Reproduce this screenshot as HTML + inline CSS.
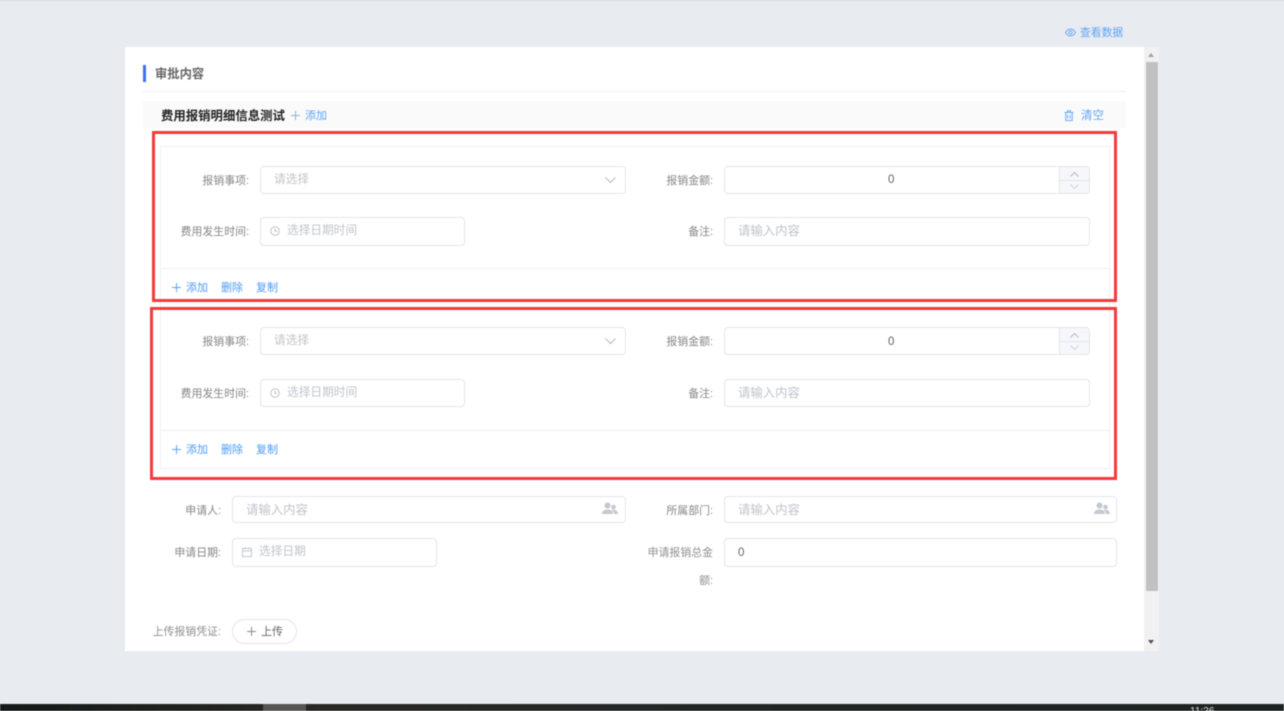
<!DOCTYPE html>
<html lang="zh-CN">
<head>
<meta charset="utf-8">
<title>审批内容</title>
<style>
html,body{margin:0;padding:0}
body{position:relative;width:1284px;height:711px;overflow:hidden;background:#e8ecf1;font-family:"Liberation Sans","Noto Sans CJK SC",sans-serif;color:#8a8a8a;font-size:11px}
#s{position:absolute;left:0;top:0;width:1284px;height:711px;filter:blur(.45px)}
.a,.t,.i{position:absolute;box-sizing:border-box}
.t{white-space:nowrap;line-height:16px;height:16px}
.l{text-align:right;color:#858585;font-size:10.900px;transform:translate(-1px,1px)}
.p{color:#bfc3ca;font-size:11.700px}
.q{color:#bfc3ca;font-size:12.400px}
.b{color:#4c9bfb;font-size:11px;transform:translateY(1px)}
.i{background:#fff;border:1px solid #e3e5ec;border-radius:4px}
svg{position:absolute;overflow:visible}
.red{position:absolute;box-sizing:border-box;border:3px solid #f23c3c}
</style>
</head>
<body>
<div id="s">
<div class="a" style="left:0;top:0;width:1284px;height:1px;background:#d5d8de"></div>

<svg style="left:1065px;top:28px" width="11" height="9" viewBox="0 0 11 9" fill="none" stroke="#6ea9f5" stroke-width="1"><path d="M.5 4.500C2 2 3.700 1 5.500 1S9 2 10.500 4.500C9 7 7.300 8 5.500 8S2 7 .5 4.500Z"/><circle cx="5.500" cy="4.500" r="1.600"/></svg>
<div class="t b" style="left:1080px;top:24px;font-size:10.800px;color:#5da3f5">查看数据</div>

<div class="a" style="left:125px;top:47px;width:1019px;height:604px;background:#fff"></div>
<div class="a" style="left:1144px;top:47px;width:15px;height:604px;background:#f1f1f1"></div>
<div class="a" style="left:1146px;top:62px;width:12px;height:529px;background:#c1c1c1"></div>
<div class="a" style="left:1148px;top:53px;border-left:3.500px solid transparent;border-right:3.500px solid transparent;border-bottom:4px solid #a3a3a3"></div>
<div class="a" style="left:1148px;top:640px;border-left:3.500px solid transparent;border-right:3.500px solid transparent;border-top:4px solid #505050"></div>

<div class="a" style="left:143px;top:65px;width:3px;height:17px;background:#3f6ff5"></div>
<div class="t" style="left:155px;top:66px;font-size:12.300px;font-weight:bold;color:#666">审批内容</div>
<div class="a" style="left:143px;top:91px;width:983px;height:1px;background:#eeeff2"></div>

<div class="a" style="left:143px;top:101px;width:983px;height:27px;background:#fafafa"></div>
<div class="t" style="left:161px;top:108px;font-size:12.400px;font-weight:bold;color:#222">费用报销明细信息测试</div>
<svg style="left:291px;top:111px" width="9" height="9" fill="none" stroke="#8ab0e0"><path d="M4.500 0v9M0 4.500h9"/></svg>
<div class="t b" style="left:305px;top:107px;color:#5da3f5">添加</div>
<svg style="left:1064px;top:110px" width="10" height="11" viewBox="0 0 10 11" fill="none" stroke="#6ea9f5"><path d="M.5 2.500h9M3.500 2.500V.8h3v1.700M1.800 2.500v8h6.400v-8M3.800 5v3.500M6.200 5v3.500"/></svg>
<div class="t b" style="left:1081px;top:107px;color:#5da3f5;font-size:11.500px">清空</div>

<!-- item 1 -->
<div class="a" style="left:160px;top:146px;width:950px;height:200px;border:1px solid #eef0f5;border-bottom:none"></div>
<div class="a" style="left:161px;top:268px;width:948px;height:1px;background:#eef0f5"></div>
<div class="t l" style="left:160px;top:172px;width:90px">报销事项:</div>
<div class="i" style="left:260px;top:166px;width:366px;height:28px"></div>
<div class="t p" style="left:274px;top:172px">请选择</div>
<svg style="left:605px;top:177px" width="11" height="6" fill="none" stroke="#b4b8bf"><path d="M.5.500l5 5 5-5"/></svg>
<div class="t l" style="left:624px;top:172px;width:90px">报销金额:</div>
<div class="i" style="left:724px;top:166px;width:366px;height:28px"></div>
<div class="a" style="left:1059px;top:167px;width:30px;height:26px;background:#f6f7fa;border-left:1px solid #e3e5ec;border-radius:0 3px 3px 0"></div>
<div class="a" style="left:1060px;top:180px;width:29px;height:1px;background:#e3e5ec"></div>
<svg style="left:1070px;top:172px" width="9" height="17" fill="none" stroke="#b4b8bf"><path d="M.5 4.500l4-4 4 4"/><path stroke="#d0d3d9" d="M.5 12.500l4 4 4-4"/></svg>
<div class="t" style="left:888px;top:172px;color:#606266;font-size:11.500px">0</div>
<div class="t l" style="left:160px;top:223px;width:90px">费用发生时间:</div>
<div class="i" style="left:260px;top:217px;width:205px;height:29px"></div>
<svg style="left:270px;top:226px" width="10" height="10" fill="none" stroke="#bfc3ca"><circle cx="5" cy="5" r="4.300"/><path d="M5 2.500v2.800h2.200"/></svg>
<div class="t p" style="left:287px;top:223px">选择日期时间</div>
<div class="t l" style="left:624px;top:223px;width:90px">备注:</div>
<div class="i" style="left:724px;top:217px;width:366px;height:29px"></div>
<div class="t q" style="left:738px;top:223px">请输入内容</div>
<svg style="left:172px;top:283px" width="9" height="9" fill="none" stroke="#5da3f5"><path d="M4.500 0v9M0 4.500h9"/></svg>
<div class="t b" style="left:186px;top:279px">添加</div>
<div class="t b" style="left:221px;top:279px">删除</div>
<div class="t b" style="left:256px;top:279px">复制</div>

<!-- item 2 -->
<div class="a" style="left:160px;top:308px;width:950px;height:161px;border:1px solid #eef0f5;border-top:none"></div>
<div class="a" style="left:161px;top:430px;width:948px;height:1px;background:#eef0f5"></div>
<div class="t l" style="left:160px;top:333px;width:90px">报销事项:</div>
<div class="i" style="left:260px;top:327px;width:366px;height:28px"></div>
<div class="t p" style="left:274px;top:333px">请选择</div>
<svg style="left:605px;top:338px" width="11" height="6" fill="none" stroke="#b4b8bf"><path d="M.5.500l5 5 5-5"/></svg>
<div class="t l" style="left:624px;top:333px;width:90px">报销金额:</div>
<div class="i" style="left:724px;top:327px;width:366px;height:28px"></div>
<div class="a" style="left:1059px;top:328px;width:30px;height:26px;background:#f6f7fa;border-left:1px solid #e3e5ec;border-radius:0 3px 3px 0"></div>
<div class="a" style="left:1060px;top:341px;width:29px;height:1px;background:#e3e5ec"></div>
<svg style="left:1070px;top:333px" width="9" height="17" fill="none" stroke="#b4b8bf"><path d="M.5 4.500l4-4 4 4"/><path stroke="#d0d3d9" d="M.5 12.500l4 4 4-4"/></svg>
<div class="t" style="left:888px;top:333px;color:#606266;font-size:11.500px;transform:translateY(1px)">0</div>
<div class="t l" style="left:160px;top:385px;width:90px">费用发生时间:</div>
<div class="i" style="left:260px;top:379px;width:205px;height:28px"></div>
<svg style="left:270px;top:388px" width="10" height="10" fill="none" stroke="#bfc3ca"><circle cx="5" cy="5" r="4.300"/><path d="M5 2.500v2.800h2.200"/></svg>
<div class="t p" style="left:287px;top:385px">选择日期时间</div>
<div class="t l" style="left:624px;top:385px;width:90px">备注:</div>
<div class="i" style="left:724px;top:379px;width:366px;height:28px"></div>
<div class="t q" style="left:738px;top:385px">请输入内容</div>
<svg style="left:172px;top:445px" width="9" height="9" fill="none" stroke="#5da3f5"><path d="M4.500 0v9M0 4.500h9"/></svg>
<div class="t b" style="left:186px;top:441px">添加</div>
<div class="t b" style="left:221px;top:441px">删除</div>
<div class="t b" style="left:256px;top:441px">复制</div>

<!-- red boxes -->
<div class="red" style="left:152px;top:131px;width:965px;height:171px"></div>
<div class="red" style="left:150px;top:307px;width:967px;height:173px"></div>

<!-- footer form -->
<div class="t l" style="left:132px;top:502px;width:90px">申请人:</div>
<div class="i" style="left:232px;top:496px;width:394px;height:27px"></div>
<div class="t q" style="left:246px;top:502px">请输入内容</div>
<svg style="left:602px;top:502px" width="16" height="13" viewBox="0 0 16 13" fill="#c4c8cf"><circle cx="5.500" cy="3.500" r="3"/><path d="M0 12c0-3 2.500-4.500 5.500-4.500S11 9 11 12z"/><circle cx="11.500" cy="5" r="2.300"/><path d="M9.500 8c3-1 6 0 6.500 4h-4c0-1.500-1-3-2.500-4z"/></svg>
<div class="t l" style="left:624px;top:502px;width:90px">所属部门:</div>
<div class="i" style="left:724px;top:496px;width:393px;height:27px"></div>
<div class="t q" style="left:738px;top:502px">请输入内容</div>
<svg style="left:1094px;top:502px" width="16" height="13" viewBox="0 0 16 13" fill="#c4c8cf"><circle cx="5.500" cy="3.500" r="3"/><path d="M0 12c0-3 2.500-4.500 5.500-4.500S11 9 11 12z"/><circle cx="11.500" cy="5" r="2.300"/><path d="M9.500 8c3-1 6 0 6.500 4h-4c0-1.500-1-3-2.500-4z"/></svg>

<div class="t l" style="left:132px;top:544px;width:90px">申请日期:</div>
<div class="i" style="left:232px;top:538px;width:205px;height:29px"></div>
<svg style="left:242px;top:547px" width="10" height="10" fill="none" stroke="#c4c8cf"><path d="M.5 1.500h9v8h-9zM.5 4h9M3 .2v2M7 .2v2"/></svg>
<div class="t p" style="left:259px;top:544px">选择日期</div>
<div class="t l" style="left:624px;top:544px;width:90px;color:#8f8f8f">申请报销总金</div>
<div class="t l" style="left:624px;top:572px;width:90px;color:#8f8f8f">额:</div>
<div class="i" style="left:724px;top:538px;width:393px;height:29px"></div>
<div class="t" style="left:738px;top:545px;color:#606266;font-size:11.500px">0</div>

<div class="t l" style="left:132px;top:623px;width:90px;color:#8f8f8f">上传报销凭证:</div>
<div class="i" style="left:232px;top:619px;width:65px;height:25px;border-radius:13px"></div>
<svg style="left:247px;top:627px" width="9" height="9" fill="none" stroke="#8a8a8a"><path d="M4.500 0v9M0 4.500h9"/></svg>
<div class="t" style="left:261px;top:624px;color:#666;font-size:11px">上传</div>

<!-- taskbar -->
<div class="a" style="left:0;top:704px;width:1284px;height:7px;background:linear-gradient(90deg,#141a18,#2a2825 25%,#232725 50%,#1d2321 100%)"></div>
<div class="a" style="left:263px;top:704px;width:43px;height:7px;background:#565554"></div>
<div class="a" style="left:1190px;top:707px;width:30px;height:4px;overflow:hidden;color:#ddd;font-size:10px;line-height:10px;white-space:nowrap">11:26</div>
</div>
</body>
</html>
